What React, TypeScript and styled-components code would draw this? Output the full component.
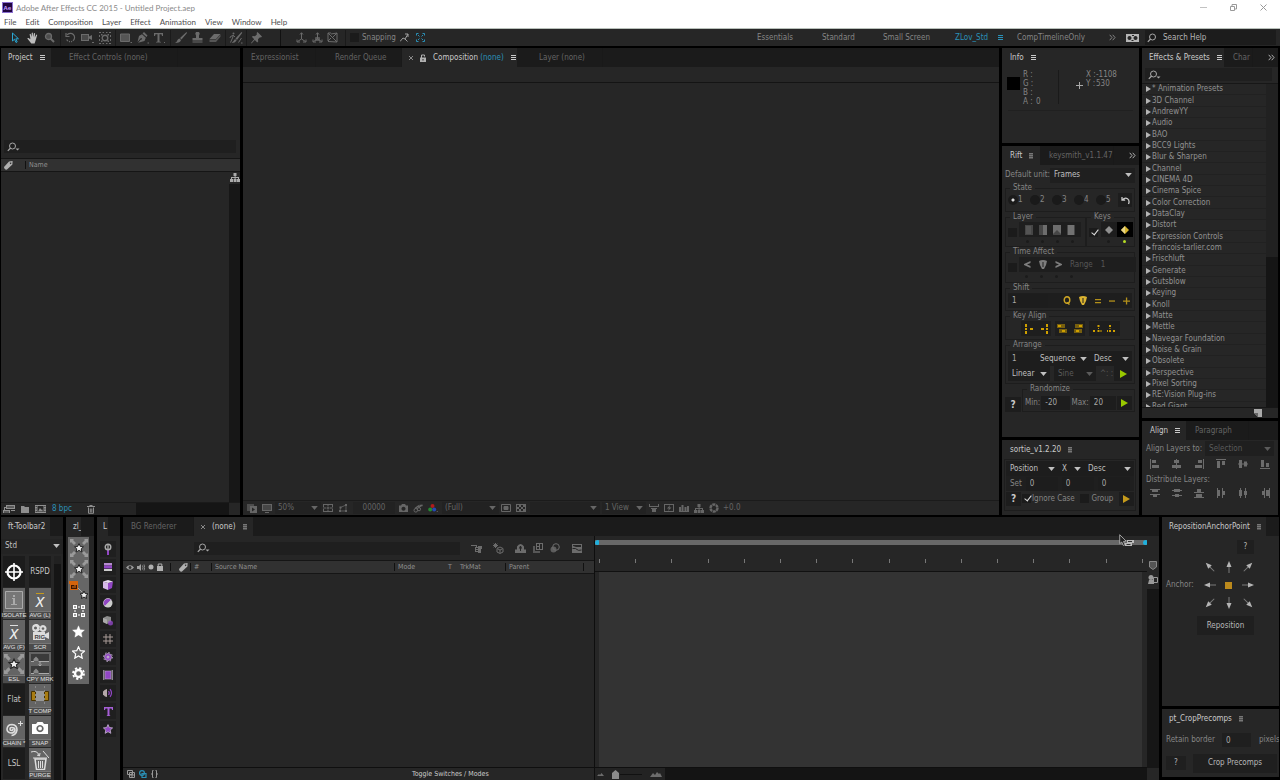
import React from "react";
import styled, { createGlobalStyle, css } from "styled-components";

const ui = '"DejaVu Sans Condensed", "DejaVu Sans", "Open Sans", sans-serif';
const system = 'Lato, "Open Sans", sans-serif';

const Global = createGlobalStyle`
  * { box-sizing: border-box; }
  html, body { margin: 0; padding: 0; background: #000; }
  body { font: 8px/10px ${ui}; color: #858585; }
  button, input, select { font: inherit; color: inherit; background: none; border: 0; padding: 0; margin: 0; border-radius: 0; outline: 0; }
  svg { display: block; flex: none; }
  ul { list-style: none; margin: 0; padding: 0; }
`;

/* ---------- frame ---------- */
const Shell = styled.div`
  display: flex; flex-direction: column; height: 100vh; min-height: 720px; overflow: hidden; background: #000;
`;
const TitleBar = styled.header`
  display: flex; align-items: center; height: 15px; padding: 0 2px; background: #fff; color: #8a8a8a; font: 8px/14px ${system};
`;
const Title = styled.span`flex: 1; padding-left: 3px;`;
const WindowButton = styled.button`
  width: 30px; height: 14px; display: grid; place-items: center; color: #999;
`;
const MenuBar = styled.nav`
  display: flex; gap: 9px; height: 14px; padding-left: 4px; background: #fff; border-bottom: 1px solid #b8c0ba;
`;
const MenuItem = styled.button`color: #505050; font: 8px/14px ${system};`;
const Toolbar = styled.div`
  display: flex; align-items: center; height: 17px; padding-left: 5px; background: #262626; color: #858585;
`;
const ToolGroup = styled.div`
  display: flex; align-items: center; height: 16px; padding: 0 2px;
  & + & { border-left: 1px solid #1a1a1a; padding-left: 1px; }
`;
const Tool = styled.button<{ $color?: string; $w?: number }>`
  display: grid; place-items: center; width: ${p => p.$w ?? 17}px; height: 16px; color: ${p => p.$color ?? "#6b6b6b"};
`;
const AxisTools = styled.div`
  display: flex; align-items: center; height: 16px; margin-left: 13px; padding: 0 5px 0 12px; border-left: 1px solid #111;
`;
const CheckLabel = styled.label<{ $gap?: number }>`
  display: flex; align-items: center; gap: ${p => p.$gap ?? 3}px; white-space: nowrap;
`;
const Check = styled.input`
  appearance: none; width: 9px; height: 9px; background: #1b1b1b; flex: none;
  &:checked::after {
    content: ""; display: block; width: 3px; height: 6px; margin: 0 0 0 4px;
    border: solid #ddd; border-width: 0 1px 1px 0; transform: rotate(38deg);
  }
`;
const Snapping = styled.div`display: flex; align-items: center; height: 16px; padding-left: 4px; border-left: 1px solid #1a1a1a; gap: 2px;`;
const Workspaces = styled.nav`
  display: flex; flex: 1; align-items: center; height: 17px; justify-content: flex-end;
`;
const Workspace = styled.button<{ $on?: boolean; $w: number }>`
  width: ${p => p.$w}px; text-align: left; color: ${p => (p.$on ? "#2a91b8" : "#858585")}; display: flex; gap: 10px; align-items: center; white-space: nowrap;
`;
const HelpSearch = styled.label`
  display: flex; align-items: center; gap: 2px; width: 131px; height: 15px; padding-left: 2px; margin: 0 4px 0 6px; background: #1c1c1c; color: #b0b0b0;
  input { width: 100px; }
  input::placeholder { color: #b5b5b5; opacity: 1; }
`;

const Upper = styled.main`display: flex; flex: 1; min-height: 0; gap: 3px; padding: 2px 2px 0 1px;`;
const Lower = styled.section`display: flex; height: 263px; flex: none; gap: 3px; padding: 0 1px; margin-top: 2px;`;
const Column = styled.div<{ $w: number }>`
  display: flex; flex-direction: column; gap: 3px; width: ${p => p.$w}px; flex: none; min-height: 0;
`;
const Panel = styled.section<{ $w?: number; $h?: number }>`
  display: flex; flex-direction: column; min-width: 0; min-height: 0; overflow: hidden; background: #262626;
  ${p => (p.$w ? css`width: ${p.$w}px; flex: none;` : css`flex: 1;`)}
  ${p => p.$h && css`height: ${p.$h}px; flex: none;`}
`;
const Tabs = styled.div`display: flex; height: 19px; flex: none; background: #1b1b1b; overflow: hidden;`;
const Tab = styled.button<{ $on?: boolean; $w: number; $pad?: number }>`
  display: flex; align-items: center; gap: 7px; width: ${p => p.$w}px; flex: none; padding-left: ${p => p.$pad ?? 8}px;
  white-space: nowrap; overflow: hidden; color: #646464; border-right: 1px solid #191919;
  ${p => p.$on && css`color: #cacaca; background: #262626; border-right: 0;`}
`;
const More = styled.button`margin-left: auto; padding-right: 3px; color: #b0b0b0;`;
const Blue = styled.span`color: #2a91b8;`;
const Spacer = styled.div`flex: 1;`;

/* ---------- glyphs ---------- */
type GProps = { w?: number; h?: number; box?: string; children: React.ReactNode; stroke?: boolean; sw?: number; color?: string };
const G = ({ w = 12, h = 12, box, children, stroke, sw = 1, color }: GProps) => (
  <svg width={w} height={h} viewBox={box ?? `0 0 ${w} ${h}`} color={color} aria-hidden="true"
    fill={stroke ? "none" : "currentColor"} stroke={stroke ? "currentColor" : "none"} strokeWidth={sw}>{children}</svg>
);
const Burger = () => <G w={5} h={6}><path d="M0 0h5v1H0zM0 2h5v1H0zM0 4h5v1H0z" /></G>;
const Grip = () => <G w={4} h={6} color="#777"><path d="M0 0h4v1H0zM0 2h4v1H0zM0 4h4v1H0z" /><path d="M0 0h4v6H0z" opacity=".5" /></G>;
const Chevrons = () => <G w={7} h={7} stroke><path d="M.7.8 3 3.5.7 6.2M3.7.8 6 3.5 3.7 6.2" /></G>;
const Down = () => <G w={7} h={4}><path d="M.2 0h6.600L3.500 4z" /></G>;
const Lens = ({ menu = true }: { menu?: boolean }) => (
  <G w={14} h={10} color="#a8a8a8"><circle cx="5.500" cy="4" r="3" fill="none" stroke="currentColor" strokeWidth="1" /><path d="M3.600 6 .8 8.800" stroke="currentColor" strokeWidth="1.200" />{menu && <path d="M8.500 6.500h4l-2 2z" />}</G>
);
const Tag = () => <G w={9} h={9} color="#b0b0b0"><path fillRule="evenodd" d="M0 6 5 .6 8.600 0 8.400 3.400 3 8.600Q1.700 9 .8 8 0 7 0 6zM6.600 1.400a.8.8 0 1 0 .01 0z" /></G>;
const Flow = ({ color }: { color?: string }) => <G w={10} h={9} color={color}><path d="M3.500 0h3v3h-3zM0 6h3v3H0zM3.600 6h3v3h-3zM7 6h3v3H7zM4.600 3h1v3h-1zM1 4h8v.9H1zM1 4h1v2H1zM8 4h1v2H8z" /></G>;
const Star = ({ w = 10, color = "#fff", line, fill }: { w?: number; color?: string; line?: boolean; fill?: string }) => (
  <G w={w} h={w} box="0 0 12 12" color={color}><path d="M6 .7 7.600 4.300l3.900.4-2.900 2.600.8 3.900L6 9.200l-3.400 2 .8-3.900L.5 4.700l3.900-.4z" fill={fill ?? (line ? "none" : "currentColor")} stroke="currentColor" strokeWidth={line || fill ? 1.1 : 0.3} /></G>
);
const Pointer = ({ color }: { color: string }) => <G w={8} h={9} color={color}><path d="M0 1Q4-1 8 1L7 5 5 9H3L1 5z" /><path d="M4 2v5" stroke="#222" /></G>;

/* ---------- generic parts ---------- */
const SelectWrap = styled.span<{ $w?: number; $dim?: boolean; $bg?: string }>`
  position: relative; display: flex; align-items: center; height: 15px; flex: ${p => (p.$w ? "none" : 1)};
  ${p => p.$w && css`width: ${p.$w}px;`}
  background: ${p => p.$bg ?? "#1d1d1d"}; color: ${p => (p.$dim ? "#5b5b5b" : "#c0c0c0")};
  select { appearance: none; width: 100%; padding: 0 9px 0 4px; }
  svg { position: absolute; right: 3px; pointer-events: none; }
`;
const Select = ({ value, label, w, dim, bg }: { value: string; label: string; w?: number; dim?: boolean; bg?: string }) => (
  <SelectWrap $w={w} $dim={dim} $bg={bg}><select aria-label={label} defaultValue={value}><option>{value}</option></select><Down /></SelectWrap>
);
const Field = styled.input<{ $w: number; $bg?: string }>`
  width: ${p => p.$w}px; height: 14px; padding-left: 4px; background: ${p => p.$bg ?? "#1d1d1d"}; color: #a8a8a8;
`;
const Row = styled.div<{ $h?: number; $gap?: number; $pad?: string; $bg?: string }>`
  display: flex; align-items: center; flex: none; gap: ${p => p.$gap ?? 0}px; padding: ${p => p.$pad ?? "0"};
  ${p => p.$h && css`height: ${p.$h}px;`} ${p => p.$bg && css`background: ${p.$bg};`}
`;
const DarkButton = styled.button<{ $w: number; $h?: number; $bg?: string; $end?: boolean }>`
  display: grid; place-items: center; width: ${p => p.$w}px; height: ${p => p.$h ?? 15}px; background: ${p => p.$bg ?? "#1d1d1d"}; color: #b8b8b8;
  ${p => p.$end && css`margin-left: auto;`}
`;
const Dim = styled.span`color: #646464;`;

/* ---------- project ---------- */
const SearchStrip = styled.label<{ $m?: string }>`
  display: flex; align-items: center; gap: 4px; height: 13px; margin: ${p => p.$m ?? "0"}; padding-left: 3px; background: #1f1f1f;
  input { flex: 1; min-width: 0; }
`;
const ListHead = styled.div`
  display: flex; align-items: center; height: 14px; flex: none; padding-left: 3px; background: #313131; border: solid #151515; border-width: 1px 0; color: #8f8f8f; font-size: 7px;
`;
const HeadCell = styled.span<{ $w?: number; $line?: boolean }>`
  display: flex; align-items: center; height: 8px; white-space: nowrap; ${p => p.$w && css`width: ${p.$w}px;`} flex: none;
  ${p => p.$line && css`border-left: 1px solid #111; padding-left: 3px;`}
`;
const ProjectBody = styled.div`display: flex; flex: 1; justify-content: flex-end;`;
const SideRail = styled.div<{ $w?: number }>`
  display: flex; flex-direction: column; align-items: center; gap: 2px; width: ${p => p.$w ?? 11}px; padding-top: 1px;
  &::after { content: ""; flex: 1; width: 100%; background: #171717; }
`;
const ProjectFoot = styled.div`display: flex; align-items: center; height: 13px; flex: none; padding-left: 2px; color: #8f8f8f; border-top: 1px solid #1a1a1a;`;
const ScrollTrack = styled.div`flex: 1; height: 12px; background: #151515; margin: 0 11px 0 5px; &::before { content: ""; display: block; width: 36px; height: 12px; background: #242424; }`;

const Project = () => (
  <Panel $w={239}>
    <Tabs>
      <Tab $on $w={50} $pad={7}>Project <Burger /></Tab>
      <Tab $w={127} $pad={18}>Effect Controls (none)</Tab>
    </Tabs>
    <Row $h={73} />
    <SearchStrip $m="0 4px 5px 3px"><Lens /><input aria-label="Search project" /></SearchStrip>
    <ListHead><HeadCell $w={21}><Tag /></HeadCell><HeadCell $line>Name</HeadCell></ListHead>
    <ProjectBody><SideRail><Flow color="#aaa" /></SideRail></ProjectBody>
    <ProjectFoot>
      <Row $gap={6}>
        <G w={12} h={10}><path d="M3 1h9v4H3zM0 6h7v3H0zM1 3h1v3H1zM1 3h2v1H1zM8 6h4v1H8z" /><path d="M4 3h7M1 8h5" stroke="#262626" /></G>
        <G w={8} h={8}><path d="M0 1h3l1 1h4v6H0z" /></G>
        <G w={11} h={8}><path fillRule="evenodd" d="M0 0h11v8H0zM2.500 1h6v6h-6zM.7 1v1h1V1zM.7 3.500v1h1v-1zM.7 6v1h1V6zM9.400 1v1h1V1zM9.400 3.500v1h1v-1zM9.400 6v1h1V6z" /><path d="M3 6.500 5 3l1.500 2L7 4l1 2.500z" /></G>
        <Blue>8 bpc</Blue>
      </Row>
      <Row $pad="0 0 0 15px"><G w={8} h={9}><path d="M0 1h8v1H0zM2.500 0h3v1h-3z" /><path d="M1.500 2.500v5.800h5V2.500M3.300 3.500v4M4.800 3.500v4" fill="none" stroke="currentColor" /></G></Row>
      <ScrollTrack />
    </ProjectFoot>
  </Panel>
);

/* ---------- composition viewer ---------- */
const Rule = styled.div`height: 16px; flex: none; border-bottom: 1px solid #141414;`;
const ViewerFoot = styled.div`display: flex; align-items: center; height: 15px; flex: none; padding-left: 3px; border-top: 1px solid #1b1b1b; color: #666;`;
const Drop = styled.button<{ $w: number }>`
  display: flex; align-items: center; justify-content: space-between; height: 12px; width: ${p => p.$w}px; padding: 0 3px; background: #222;
`;
const Icons = styled.div<{ $gap?: number; $pad?: string }>`display: flex; align-items: center; gap: ${p => p.$gap ?? 5}px; padding: ${p => p.$pad ?? "0 4px"};`;

const Viewer = () => (
  <Panel>
    <Tabs>
      <Tab $w={73}>Expressionist</Tab>
      <Tab $w={86} $pad={19}>Render Queue</Tab>
      <Tab $on $w={115} $pad={7}>
        <G w={4} h={4} stroke color="#888"><path d="M0 0l4 4M4 0 0 4" /></G>
        <G w={6} h={8} color="#b0b0b0"><path fillRule="evenodd" d="M0 3.500h6V8H0zM2.500 5v1.500h1V5z" /><path d="M1.500 4V1h3v1.500" fill="none" stroke="currentColor" /></G>
        <span>Composition <Blue>(none)</Blue></span> <Burger />
      </Tab>
      <Tab $w={86} $pad={22}>Layer (none)</Tab>
    </Tabs>
    <Rule />
    <Spacer />
    <ViewerFoot>
      <Icons $pad="0 3px 0 1px">
        <G w={10} h={9}><path d="M0 0h7v7H0z" opacity=".6" /><path d="M3 2h7v7H3z" /><path d="M5 3.500v4l3-2z" fill="#262626" /></G>
        <G w={10} h={9}><path fillRule="evenodd" d="M0 0h10v7H0zM1 1v5h8V1zM3 8h4v1H3z" /><path d="M1 1h8v5H1z" opacity=".5" /></G>
      </Icons>
      <Drop $w={46}>50%<Down /></Drop>
      <Icons $pad="0 5px 0 2px">
        <G w={10} h={8}><path d="M0 0h10v3H9V1H1v2H0zM0 5h1v2h8V5h1v3H0zM4.500 0h1v2.500h-1zM4.500 5.500h1V8h-1zM0 3.500h3v1H0zM7 3.500h3v1H7zM3.500 3.500h3v1h-3zM4.500 3h1v2h-1z" /></G>
        <G w={10} h={8}><path d="M1 6h2v2H1zM7 6h2v2H7zM1.500 2.500h2v2h-2zM7 0h2v2H7z" /><path d="M2 7h6M8 7V1L2.500 3.500 2 7" fill="none" stroke="currentColor" strokeWidth=".8" /></G>
      </Icons>
      <DarkButton $w={42} $h={12} $bg="#222"><Dim>00000</Dim></DarkButton>
      <Icons>
        <G w={9} h={8}><path fillRule="evenodd" d="M0 1.500h2L3 0h3l1 1.500h2V8H0zM4.500 2.800a2 2 0 1 0 .01 0z" /></G>
        <G w={10} h={9} stroke><circle cx="2.800" cy="6.300" r="1.800" /><circle cx="6" cy="5.200" r="1.600" /><path d="M2 4.500 6 1.500M5.500 3.500 9.500.8M6.500 1.500h3" strokeWidth="1.400" /></G>
        <G w={10} h={8}><circle cx="4.500" cy="2" r="2" fill="#b01c1c" /><circle cx="2.200" cy="5.500" r="2" fill="#258a32" /><circle cx="6.200" cy="5.500" r="2" fill="#2549b5" /><path d="M8 7h2v1z" /></G>
      </Icons>
      <Drop $w={57}>(Full)<Down /></Drop>
      <Icons $pad="0 4px 0 2px">
        <G w={10} h={8} stroke><path d="M.5.5h9v7h-9z" /><path d="M3 2.500h4v3H3z" fill="currentColor" /></G>
        <G w={10} h={8}><path fillRule="evenodd" d="M0 0h10v8H0zM1 1v2h2V1zM5 1v2h2V1zM3 3v2h2V3zM7 3v2h2V3zM1 5v2h2V5zM5 5v2h2V5z" /></G>
      </Icons>
      <Drop $w={70}><span /><Down /></Drop>
      <Icons $pad="0 1px" />
      <Drop $w={44}>1 View<Down /></Drop>
      <Icons $pad="0 2px 0 3px">
        <G w={10} h={8}><path d="M0 0h1v3h8V0h1v3H9v-1H1v1H0zM2 4h6v1H2zM3 5h4v3H3z" /></G>
        <G w={10} h={8}><path fillRule="evenodd" d="M0 0h10v8H0zM1 1v6h8V1z" /><path d="M6 1 3 4.500h2L4 7l3.500-3.500h-2z" /></G>
        <G w={10} h={8}><path d="M0 3h2v5H0zM2.500 1h2v7h-2zM5.500 3h2v5h-2zM8 2h2v6H8zM0 7h10v1H0z" /></G>
        <Flow />
      </Icons>
      <Icons $gap={4} $pad="0 4px 0 3px">
        <G w={10} h={10}><circle cx="5" cy="5" r="3.500" fill="none" stroke="currentColor" strokeWidth="2.400" strokeDasharray="3 .6" /></G>
        <Dim>+0.0</Dim>
      </Icons>
    </ViewerFoot>
  </Panel>
);

/* ---------- info ---------- */
const InfoBody = styled.div`
  display: flex; margin: 3px 6px 0; height: 41px; border-bottom: 1px solid #202020; line-height: 9px;
`;
const Swatch = styled.div`width: 13px; height: 13px; margin: 7px 3px 0 -1px; background: #000;`;
const Channels = styled.dl<{ $key: number }>`
  display: grid; grid-template-columns: ${p => p.$key}px 20px; margin: 0; align-content: start; dt, dd { margin: 0; }
`;
const Coordinates = styled.div`display: flex; margin-left: 2px; height: 34px; border-left: 1px solid #1a1a1a; padding-left: 17px; gap: 3px;`;
const CrossHair = styled.div`padding-top: 12px;`;

const Info = () => (
  <Panel $h={95}>
    <Tabs><Tab $on $w={137}>Info <Burger /></Tab></Tabs>
    <InfoBody>
      <Swatch />
      <Channels $key={13}><dt>R :</dt><dd /><dt>G :</dt><dd /><dt>B :</dt><dd /><dt>A :</dt><dd>0</dd></Channels>
      <Coordinates>
        <CrossHair><G w={7} h={7} stroke color="#aaa"><path d="M3.500 0v7M0 3.500h7" /></G></CrossHair>
        <Channels $key={10}><dt>X :</dt><dd>-1108</dd><dt>Y :</dt><dd>530</dd></Channels>
      </Coordinates>
    </InfoBody>
  </Panel>
);

/* ---------- rift ---------- */
const RiftBody = styled.div`display: flex; flex-direction: column; padding: 2px 4px 0 3px;`;
const Set = styled.fieldset<{ $h: number; $top?: boolean }>`
  display: flex; align-items: ${p => (p.$top ? "flex-start" : "center")}; min-width: 0; height: ${p => p.$h}px; margin: 0; padding: 0 2px; border: 1px solid #1d1d1d; flex: none;
  legend { padding: 0 3px; margin-left: 2px; line-height: 10px; }
`;
const Twin = styled.div`display: grid; grid-template-columns: 81px 1fr;`;
const Radio = styled.label`
  display: flex; align-items: center; width: 22px; flex: none;
  input { appearance: none; width: 10px; height: 10px; border-radius: 5px; background: #1a1a1a; }
  input:checked { background: radial-gradient(circle, #ddd 1px, #1a1a1a 2px); }
`;
const Strip = styled.div<{ $gap?: number; $h?: number; $pad?: string; $grow?: boolean; $color?: string }>`
  display: flex; align-items: center; gap: ${p => p.$gap ?? 5}px; height: ${p => p.$h ?? 15}px; padding: ${p => p.$pad ?? "0 5px"}; background: #1e1e1e;
  ${p => p.$grow && css`flex: 1;`} color: ${p => p.$color ?? "#777"}; white-space: nowrap;
`;
const Dots = styled.div<{ $gap: number; $pad: number }>`
  display: flex; gap: ${p => p.$gap}px; height: 6px; align-items: flex-end; padding-left: ${p => p.$pad}px;
  i { width: 3px; height: 3px; border-radius: 2px; background: #1b1b1b; }
  i[data-on] { background: #b5dc24; }
`;
const Stack = styled.div`display: flex; flex-direction: column;`;
const Gold = styled.div`display: flex; align-items: center; gap: 8px; color: #b3901a; margin-left: auto; padding-right: 2px;`;
const Play = ({ color = "#98c800" }: { color?: string }) => <G w={7} h={8} color={color}><path d="M0 0l7 4-7 4z" /></G>;
const Question = styled.b`color: #c8c8c8; font-size: 10px;`;
const Shade = ({ d, o }: { d: string; o: string }) => <G w={10} h={10}><path d="M1 0h8v10H1z" opacity=".45" /><path d={d} opacity={o} /></G>;
const KeyDots = ({ d, bar }: { d: string; bar?: string }) => <G w={10} h={10} color="#cfa000"><path d={d} />{bar && <path d={bar} opacity=".5" />}</G>;
const ArrangeRows = styled.div`flex: 1; display: flex; flex-direction: column; padding-top: 1px;`;
const Tiny = styled.span`width: 10px; color: #555; white-space: nowrap;`;
const RandomRow = styled.div`display: grid; grid-template-columns: 17px 1fr; align-items: end;`;
const MinMax = styled.div`display: flex; flex: 1; align-items: center; justify-content: space-between; span { flex: none; }`;

const Rift = () => (
  <Panel $h={291}>
    <Tabs><Tab $on $w={38}>Rift <Grip /></Tab><Tab $w={74} $pad={9}>keysmith_v1.1.47</Tab><More aria-label="More panels"><Chevrons /></More></Tabs>
    <RiftBody>
      <Row $h={16}><span>Default unit:</span><Select label="Default unit" value="Frames" bg="#1f1f1f" /></Row>
      <Set $h={29}><legend>State</legend>
        {[1, 2, 3, 4, 5].map(n => <Radio key={n}><input type="radio" name="state" defaultChecked={n === 1} />{n}</Radio>)}
        <DarkButton $end $w={15} $h={14} aria-label="Undo"><G w={9} h={9} stroke sw={1.3} color="#ccc"><path d="M1 1v3.200h3.200M1.500 4Q4 1 6.500 2.800t1 5.200" /></G></DarkButton>
      </Set>
      <Twin>
        <Set $h={35} $top><legend>Layer</legend>
          <Row $gap={2}>
            <Check type="checkbox" aria-label="Layer" />
            <Stack>
              <Strip $h={15} $gap={4}>
                <Shade d="M2 1h5v8H2z" o=".3" /><Shade d="M5 0h4v10H5z" o=".8" /><Shade d="M1 0h8v9L5 5 1 9z" o=".8" /><Shade d="M2 0h6v10H2z" o=".9" />
              </Strip>
              <Dots $gap={12} $pad={7}><i /><i /><i /><i /></Dots>
            </Stack>
          </Row>
        </Set>
        <Set $h={35} $top><legend>Keys</legend>
          <Row $gap={3}>
            <Check type="checkbox" defaultChecked aria-label="Keys" />
            <Stack>
              <Row>
                <DarkButton $w={16}><G w={8} h={8} color="#8f8f8f"><path d="M4 0l4 4-4 4-4-4z" /></G></DarkButton>
                <DarkButton $w={16} $bg="#000"><G w={8} h={8}><path d="M4 0l4 4-4 4-4-4z" fill="#d7b52c" /><path d="M4 0v8L0 4z" fill="#e6d489" /></G></DarkButton>
              </Row>
              <Dots $gap={13} $pad={6}><i /><i data-on="" /></Dots>
            </Stack>
          </Row>
        </Set>
      </Twin>
      <Set $h={36}><legend>Time Affect</legend>
        <Row $gap={2}>
          <Check type="checkbox" aria-label="Time affect" />
          <Stack>
            <Strip $gap={8} $pad="0 31px 0 5px" $color="#565656">
              <G w={7} h={7} color="#7d7d7d"><path d="M6.500 0v2L3 3.500 6.500 5v2L0 4V3z" /></G>
              <Pointer color="#7d7d7d" />
              <G w={7} h={7} color="#7d7d7d"><path d="M.5 0v2L4 3.500.5 5v2L7 4V3z" /></G>
              <span>Range</span><span>1</span>
            </Strip>
            <Dots $gap={12} $pad={6}><i /><i /><i /><i /></Dots>
          </Stack>
        </Row>
      </Set>
      <Set $h={28}><legend>Shift</legend>
        <Strip $grow $pad="0">
          <Field $w={40} defaultValue="1" aria-label="Shift amount" />
          <Gold>
            <G w={8} h={9} stroke sw={1.4} color="#cda524"><ellipse cx="4" cy="4" rx="2.800" ry="3.200" /><path d="M4 6.500 6.500 8.500" /></G>
            <Pointer color="#dcb431" />
            <G w={6} h={8}><path d="M0 2h6v1.200H0zM0 5h6v1.200H0z" /></G>
            <G w={6} h={8}><path d="M0 3.400h6v1.300H0z" /></G>
            <G w={7} h={8}><path d="M0 3.400h7v1.300H0zM2.900.5h1.300v7H2.900z" /></G>
          </Gold>
        </Strip>
      </Set>
      <Set $h={29}><legend>Key Align</legend>
        <Row $gap={4} $pad="0 0 0 13px">
          <Strip $gap={6} $pad="0 2px"><KeyDots d="M2 0h2v3H2zM2 4h2v2H2zM2 7h2v3H2zM7 4h3v2H7z" /><KeyDots d="M7 0h2v3H7zM7 4h2v2H7zM7 7h2v3H7zM2 4h3v2H2z" /></Strip>
          <Strip $gap={6} $pad="0 2px"><KeyDots d="M1 1h3v2H1zM5 6h3v2H5z" bar="M0 0h8v4H0zM2 5h8v4H2z" /><KeyDots d="M6 1h3v2H6zM3 6h3v2H3z" bar="M2 0h8v4H2zM1 5h8v4H1z" /></Strip>
          <Strip $gap={5} $pad="0 3px"><KeyDots d="M5.500 1h2v2h-2zM1 6h2v2H1zM5.500 6h2v2h-2zM8.500 6h1v2h-1zM6 4h1v1H6z" /><KeyDots d="M2 1h2v2H2zM2 6h2v2H2zM6 6h2v2H6zM0 6h1v2H0zM2.500 4h1v1h-1z" /></Strip>
        </Row>
      </Set>
      <Set $h={44}><legend>Arrange</legend>
        <ArrangeRows>
          <Row $bg="#1d1d1d"><Field $w={28} defaultValue="1" aria-label="Arrange step" /><Select w={54} label="Arrange mode" value="Sequence" /><Select label="Arrange order" value="Desc" /></Row>
          <Row $gap={4}><Select w={42} label="Easing" value="Linear" /><Select w={42} dim label="Curve" value="Sine" /><Tiny>^: :</Tiny><DarkButton $end $w={18} aria-label="Arrange"><Play /></DarkButton></Row>
        </ArrangeRows>
      </Set>
      <RandomRow>
        <DarkButton $w={16} $h={15}><Question>?</Question></DarkButton>
        <Set $h={28}><legend>Randomize</legend>
          <MinMax><span>Min:</span><Field $w={29} defaultValue="-20" aria-label="Min" /><span>Max:</span><Field $w={26} defaultValue="20" aria-label="Max" /><DarkButton $w={15} $h={14} aria-label="Randomize"><Play /></DarkButton></MinMax>
        </Set>
      </RandomRow>
    </RiftBody>
  </Panel>
);

/* ---------- sortie ---------- */
const SortieBody = styled.div`margin: 0 3px 4px 2px; padding: 1px 1px 0; border: 1px solid #1d1d1d; flex: 1;`;
const Sortie = () => (
  <Panel>
    <Tabs><Tab $on $w={137}>sortie_v1.2.20 <Grip /></Tab></Tabs>
    <SortieBody>
      <Row $h={15} $bg="#1f1f1f"><Select w={52} label="Sort by" value="Position" /><Select w={26} label="Axis" value="X" /><Select label="Order" value="Desc" /></Row>
      <Row $h={15} $bg="#1f1f1f" $gap={4} $pad="0 0 0 4px"><span>Set</span><Field $w={32} defaultValue="0" aria-label="Set x" /><Field $w={32} defaultValue="0" aria-label="Set y" /><Field $w={32} defaultValue="0" aria-label="Set z" /></Row>
      <Row $h={15} $gap={1}>
        <DarkButton $w={15} $h={14}><Question>?</Question></DarkButton>
        <CheckLabel $gap={1}><Check type="checkbox" defaultChecked />Ignore Case</CheckLabel>
        <Spacer />
        <CheckLabel $gap={2}><Check type="checkbox" />Group</CheckLabel>
        <Spacer />
        <DarkButton $w={15} $h={14} aria-label="Sort"><Play color="#c59a1b" /></DarkButton>
      </Row>
    </SortieBody>
  </Panel>
);

/* ---------- effects & align ---------- */
const effects = ["* Animation Presets", "3D Channel", "AndrewYY", "Audio", "BAO", "BCC9 Lights", "Blur & Sharpen", "Channel", "CINEMA 4D", "Cinema Spice", "Color Correction", "DataClay", "Distort", "Expression Controls", "francois-tarlier.com", "Frischluft", "Generate", "Gutsblow", "Keying", "Knoll", "Matte", "Mettle", "Navegar Foundation", "Noise & Grain", "Obsolete", "Perspective", "Pixel Sorting", "RE:Vision Plug-ins", "Red Giant"];
const EffectsArea = styled.div`display: flex; flex: 1; min-height: 0; overflow: hidden; border-top: 1px solid #171717;`;
const EffectList = styled.ul`flex: 1; display: grid; grid-template-rows: repeat(29, 1fr); height: 329px; color: #929292;`;
const Effect = styled.li`
  display: flex; align-items: center; gap: 1px; padding-left: 3px; border-bottom: 1px solid #212121; white-space: nowrap;
  svg { color: #b5b5b5; }
`;
const Scroll = styled.div<{ $w: number; $thumb: number }>`
  width: ${p => p.$w}px; background: #151515; flex: none;
  &::before { content: ""; display: block; height: ${p => p.$thumb}px; background: #212121; }
`;
const EffectsFoot = styled.div`display: flex; align-items: center; justify-content: flex-end; height: 11px; flex: none; border-top: 1px solid #161616; padding-right: 16px;`;

const Effects = () => (
  <Panel>
    <Tabs><Tab $on $w={82} $pad={7}>Effects &amp; Presets <Burger /></Tab><Tab $w={29} $pad={9}>Char</Tab><More aria-label="More panels"><Chevrons /></More></Tabs>
    <SearchStrip $m="1px 6px 2px 3px"><Lens /><input aria-label="Search effects" /></SearchStrip>
    <EffectsArea>
      <EffectList>{effects.map(e => <Effect key={e}><G w={6} h={6}><path d="M1 0l5 3-5 3z" /></G>{e}</Effect>)}</EffectList>
      <Scroll $w={12} $thumb={173} />
    </EffectsArea>
    <EffectsFoot><G w={8} h={8} color="#aaa"><path d="M0 0h8v8H4L0 4z" /><path d="M0 4h4v4z" fill="#666" /></G></EffectsFoot>
  </Panel>
);

const AlignBody = styled.div`padding: 2px 4px; display: flex; flex-direction: column;`;
const AlignIcons = styled.div<{ $h: number }>`
  display: grid; grid-template-columns: repeat(6, 1fr); justify-items: center; align-items: center; height: ${p => p.$h}px; color: #6c6c6c; margin: 0 -2px;
`;
const alignGlyphs = ["M0 0h1v10H0zM2 1h4v3H2zM2 6h7v3H2z", "M4 0h1v10H4zM2 1h5v3H2zM0 6h9v3H0z", "M9 0h1v10H9zM4 1h4v3H4zM1 6h7v3H1z", "M0 0h10v1H0zM1 2h3v7H1zM6 2h3v4H6z", "M0 4.500h10v1H0zM1 1h3v8H1zM6 2.500h3v5H6z", "M0 9h10v1H0zM1 1h3v7H1zM6 4h3v4H6z"];
const distGlyphs = ["M0 1h10v1H0zM2 2h6v2H2zM0 6h10v1H0zM3 7h4v2H3z", "M2 1h6v3H2zM0 2h10v1H0zM3 6h4v3H3zM0 7h10v1H0z", "M3 1h4v3H3zM0 4h10v1H0zM2 6h6v3H2zM0 9h10v1H0z", "M1 0h1v10H1zM2 2h2v6H2zM6 0h1v10H6zM7 3h2v4H7z", "M2 0h1v10H2zM1 2h3v6H1zM7 0h1v10H7zM6 3h3v4H6z", "M4 0h1v10H4zM2 3h2v4H2zM9 0h1v10H9zM6 2h3v6H6z"];
const Align = () => (
  <Panel $h={94}>
    <Tabs><Tab $on $w={44}>Align <Burger /></Tab><Tab $w={63} $pad={9}>Paragraph</Tab></Tabs>
    <AlignBody>
      <Row $h={13} $gap={3}><span>Align Layers to:</span><Select label="Align layers to" value="Selection" dim bg="#1f1f1f" /></Row>
      <AlignIcons $h={18}>{alignGlyphs.map((d, i) => <G key={i} w={10} h={10}><path d={d} /></G>)}</AlignIcons>
      <Row $h={14}><span>Distribute Layers:</span></Row>
      <AlignIcons $h={12}>{distGlyphs.map((d, i) => <G key={i} w={10} h={10}><path d={d} /></G>)}</AlignIcons>
    </AlignBody>
  </Panel>
);

/* ---------- ft-toolbar ---------- */
const FtBody = styled.div`display: flex; flex: 1; min-height: 0; overflow: hidden; padding-left: 2px; gap: 3px;`;
const FtGrid = styled.div`display: grid; grid-template-columns: 22px 22px; grid-auto-rows: 31px; gap: 1px 4px;`;
const Cell = styled.button<{ $flat?: boolean }>`
  display: flex; flex-direction: column; align-items: center; justify-content: center; height: 31px; color: #c8c8c8;
  background: ${p => (p.$flat ? "#1c1c1c" : "#646464")};
`;
const Pic = styled.span`flex: 1; min-height: 0; display: grid; place-items: center;`;
const Cap = styled.span`
  display: flex; justify-content: center; width: 22px; height: 8px; background: #4c4c4c; border-top: 1px solid #777; color: #e0e0e0;
  font: 6px/7px "Liberation Sans Narrow", "Liberation Sans", sans-serif; white-space: nowrap;
`;
const MeanBar = styled.i<{ $c: string }>`
  display: flex; flex-direction: column; align-items: center; font: italic 18px/14px "Open Sans", sans-serif; color: #eee;
  &::before { content: ""; width: 8px; height: 1px; background: ${p => p.$c}; margin-bottom: -1px; }
`;
const Burst = ({ w = 18 }: { w?: number }) => (
  <G w={w} h={w} box="0 0 18 18" color="#a8a8a8"><path d="M0 0h4L3 1l3 3-2 2-3-3-1 1zM18 0v4l-1-1-3 3-2-2 3-3-1-1zM0 18v-4l1 1 3-3 2 2-3 3 1 1zM18 18h-4l1-1-3-3 2-2 3 3 1-1z" opacity=".8" /><path d="M9 4.500l1.400 3 3.100.3-2.300 2.100.7 3.100L9 11.400 6.100 13l.7-3.100-2.300-2.100 3.100-.3z" fill="#eee" stroke="#222" /></G>
);
const cells: { cap?: string; text?: string; pic?: React.ReactNode }[] = [
  { pic: <G w={20} h={20} stroke sw={1.6} color="#fff"><circle cx="10" cy="10" r="6.500" strokeWidth="2.200" /><path d="M10 1v18M1 10h18" /></G> },
  { text: "RSPD" },
  { cap: "ISOLATE", pic: <G w={18} h={18}><path d="M.5.5h17v17H.5z" fill="#777" stroke="#aaa" /><path d="M7 7h3v6h2v1H6v-1h2V8H7zM8 4h2v2H8z" fill="#aaa" /></G> },
  { cap: "AVG (L)", pic: <MeanBar $c="#c69a1c">x</MeanBar> },
  { cap: "AVG (F)", pic: <MeanBar $c="#ddd">x</MeanBar> },
  { cap: "SCR", pic: <G w={18} h={16}><path fillRule="evenodd" d="M4.500 0a4 4 0 1 1 0 7.900A4 4 0 0 1 4.500 0zM4.500 2.500a1.500 1.500 0 1 0 .01 0zM12 1a3.500 3.500 0 1 1-.01 0zM12 3.200a1.300 1.300 0 1 0 .01 0zM2 8h12v2l4-2v7l-4-2v3H2z" fill="#ddd" /><text x="3.500" y="14.800" fontSize="6" fontWeight="700" fill="#444" fontFamily="Liberation Sans Narrow, Liberation Sans, sans-serif">RIG</text></G> },
  { cap: "ESL", pic: <Burst w={20} /> },
  { cap: "CPY MRK", pic: <G w={18} h={20}><path d="M0 0h18v8H0zM0 12h18v8H0z" fill="#3b3b3b" /><path d="M2.500 7.500V5L5 2.500 7.500 5v2.500zM2.500 19.500V17L5 14.500 7.500 17v2.500z" fill="#888" /><path d="M0 7.500h3M7.500 7.500H18M0 19.500h3M7.500 19.500H18M9 8v4M7.500 10.500 9 12l1.500-1.500" stroke="#aaa" fill="none" /></G> },
  { text: "Flat" },
  { cap: "T COMP", pic: <G w={18} h={20}><path d="M5 5h8v10H5z" fill="#999" /><path d="M.5 5.500h4v9h-4zM13.500 5.500h4v9h-4z" fill="#a87c12" stroke="#493300" /><path d="M4.500 0v20M13.500 0v20" stroke="#888" strokeDasharray="2 2" /></G> },
  { cap: "CHAIN *", pic: <G w={20} h={18} stroke sw={1.6} color="#ddd"><path d="M9 10a1.500 1.500 0 1 1-1.500-1.500Q11 8.500 11 11q-.5 3-4 3-4-.5-4-4 .5-4.500 5-4.500 5 .5 5 5.500-1 5-5.500 5.500" /><path d="M16.500 2v5M14 4.500h5" strokeWidth="1" /></G> },
  { cap: "SNAP", pic: <G w={16} h={12}><path fillRule="evenodd" d="M0 2h4l1.500-2h5L12 2h4v10H0zM8 3a3.600 3.600 0 1 0 .01 0z" fill="#fff" /><circle cx="8" cy="6.600" r="2" fill="#fff" /></G> },
  { text: "LSL" },
  { cap: "PURGE", pic: <G w={18} h={20}><path d="M4 9h11l-1.500 10.500h-8z" fill="none" stroke="#ddd" strokeWidth="1.500" /><path d="M7.500 11v7M9.500 11v7M11.500 11v7M2 8h14M0 2q6-2 8 3M6 5l2.500 1L9 3M12 1l6 7" stroke="#ddd" fill="none" /></G> },
];
const FtToolbar = () => (
  <Panel $w={62}>
    <Tabs><Tab $on $w={49} $pad={7}>ft-Toolbar2</Tab></Tabs>
    <Row $h={20}><Select label="Toolbar set" value="Std" bg="#232323" /></Row>
    <FtBody>
      <FtGrid>{cells.map((c, i) => <Cell key={i} $flat={!c.cap}>{c.text ? c.text : <Pic>{c.pic}</Pic>}{c.cap && <Cap>{c.cap}</Cap>}</Cell>)}</FtGrid>
      <Scroll $w={7} $thumb={8} />
    </FtBody>
  </Panel>
);

/* ---------- slim tool columns ---------- */
const SlimList = styled.div<{ $bg?: string; $gap?: number; $m: string }>`display: flex; flex-direction: column; gap: ${p => p.$gap ?? 0}px; margin: ${p => p.$m}; background: ${p => p.$bg ?? "none"};`;
const SlimButton = styled.button<{ $h: number; $bg?: string }>`display: grid; place-items: center; height: ${p => p.$h}px; background: ${p => p.$bg ?? "none"};`;
const zlIcons = [
  <Burst w={18} />, <Burst w={18} />,
  <G w={20} h={20}><path d="M0 1h9v3H0zM1 4h8v6H1z" fill="#d5640c" /><path d="M2 5h6v4H2z" fill="#3c1500" /><path d="M4 6v2M6 5v3" stroke="#e87a1a" /><path d="M9 8l4 4" stroke="#aaa" /><path d="M15 11l1.200 2.500 2.800.3-2 1.900.6 2.800-2.600-1.400-2.600 1.400.6-2.800-2-1.900 2.800-.3z" fill="#eee" stroke="#222" /></G>,
  <G w={12} h={12} stroke color="#fff"><path d="M.6.600h2.800v2.800H.6zM8.600.600h2.800v2.800H8.600zM.6 8.600h2.800v2.800H.6zM8.600 8.600h2.800v2.800H8.600z" strokeWidth="1.200" /><path d="M5 2h2M5 10h2M2 5v2M10 5v2" /></G>,
  <Star w={13} />, <Star w={13} line />,
  <G w={13} h={13}><circle cx="6.500" cy="6.500" r="3.500" fill="none" stroke="#fff" strokeWidth="2.400" /><circle cx="6.500" cy="6.500" r="5.500" fill="none" stroke="#fff" strokeWidth="1.800" strokeDasharray="2.300 2.020" /></G>,
];
const violet = "#9146c4", lilac = "#b9a6c6";
const layerIcons = [
  <G w={10} h={12}><path d="M4 6h2v6H4z" fill={violet} /><circle cx="5" cy="4" r="2.800" fill="none" stroke="#aaa" strokeWidth="1.400" /><path d="M4.500 2h1v4h-1z" fill="#ccc" /></G>,
  <G w={8} h={8}><path d="M0 0h8v2.500H0z" fill="#b58ad0" /><path d="M0 2.500h8v3H0z" fill={violet} /><path d="M0 6h8v2H0z" fill="#ccc" /></G>,
  <G w={10} h={10}><path d="M0 1.500 5 3v7L0 8z" fill="#d5b8e8" /><path d="M5 3l5-1.500-1 6.500-4 2z" fill={violet} /><path d="M0 1.500 5 0l5 1.500L5 3z" fill="#e8dcf0" /></G>,
  <G w={10} h={10}><circle cx="5" cy="5" r="4.500" fill="#ccc" /><path d="M1.800 8.200A4.500 4.500 0 0 1 8.200 1.800z" fill={violet} stroke="#ddd" strokeWidth=".5" /></G>,
  <G w={10} h={10}><path d="M0 2l4-2 4 1v5L4 8 0 6z" fill="#8c8c8c" /><path d="M0 2l4 1.500V8L0 6z" fill="#aaa" /><circle cx="7.500" cy="7" r="2.500" fill={violet} opacity=".8" /></G>,
  <G w={10} h={10} stroke color="#a89a96"><path d="M3 0v10M7 0v10M0 3h10M0 7h10" /></G>,
  <G w={10} h={10}><circle cx="5" cy="5" r="3.500" fill={violet} stroke={lilac} strokeWidth=".8" /><circle cx="5" cy="5" r="4.500" fill="none" stroke={lilac} strokeDasharray="1.500 2" /><circle cx="5" cy="5" r="1.500" fill={lilac} /></G>,
  <G w={10} h={10}><path d="M2 1h6v8H2z" fill={violet} stroke={lilac} strokeWidth=".6" /><path d="M0 0h1.500v10H0zM8.500 0H10v10H8.500z" fill="#8d8590" /></G>,
  <G w={10} h={10}><path d="M0 3.500Q2 1 4 1v8Q2 9 0 6.500z" fill="#b4a8a8" /><path d="M5.500 3q1.500 2 0 4M7 1.200q3 3.800 0 7.600" fill="none" stroke={violet} strokeWidth="1.200" /></G>,
  <G w={9} h={9}><path d="M0 0h9v3H8L7.500 1.500h-2V8l1 1h-4l1-1V1.500h-2L1 3H0z" fill="#a65fd6" /></G>,
  <Star w={10} color={lilac} fill={violet} />,
];

/* ---------- timeline ---------- */
const TimelineBody = styled.div`position: relative; display: flex; flex: 1; min-height: 0;`;
const LayerSide = styled.div`display: flex; flex-direction: column; width: 472px; flex: none; border-right: 1px solid #0e0e0e;`;
const SearchRow = styled.div`display: flex; align-items: center; height: 24px; padding-left: 71px; color: #6c6c6c; gap: 11px; flex: none;`;
const TimelineSearch = styled(SearchStrip)`width: 266px; flex: none;`;
const TimeFoot = styled.div`display: flex; align-items: center; height: 13px; flex: none; border-top: 1px solid #0f0f0f; padding: 0 0 1px 4px; color: #999;`;
const TimeSide = styled.div`display: flex; flex-direction: column; flex: 1; min-width: 0;`;
const Ruler = styled.div`display: flex; flex-direction: column; height: 36px; flex: none; border-bottom: 1px solid #111; padding: 4px 0 8px;`;
const WorkBar = styled.div`
  display: flex; justify-content: space-between; align-items: center; height: 5px; background: #686868;
  &::before, &::after { content: ""; width: 4px; height: 5px; border-radius: 3px 1px 1px 2px; background: #1fb0dd; }
`;
const Ticks = styled.div`display: flex; justify-content: space-between; margin: auto 4px 0; i { width: 1px; height: 4px; background: #777; }`;
const Track = styled.div`flex: 1; margin: 0 5px 0 4px; background: #333;`;
const ZoomFoot = styled.div`display: flex; align-items: center; height: 13px; flex: none; border-top: 1px solid #0f0f0f; background: #141414;`;
const ZoomBox = styled.div`display: flex; align-items: center; gap: 8px; width: 70px; height: 12px; padding-left: 2px; background: #232323; color: #6c6c6c;`;
const RightRail = styled.div`
  display: flex; flex-direction: column; align-items: center; width: 12px; flex: none; padding-top: 25px; gap: 5px; color: #999;
  &::after { content: ""; flex: 1; width: 12px; background: #161616; margin-bottom: 12px; }
`;
const Cursor = styled.div`position: absolute; right: 24px; top: -2px;`;
const Toggle = styled.button`margin: 0 0 0 auto; width: 182px; text-align: left; font-size: 7px; color: #ccc;`;

const Timeline = () => (
  <Panel>
    <Tabs>
      <Tab $w={71}>BG Renderer</Tab>
      <Tab $on $w={59} $pad={7}><G w={4} h={4} stroke color="#888"><path d="M0 0l4 4M4 0 0 4" /></G>(none) <Grip /></Tab>
    </Tabs>
    <TimelineBody>
      <LayerSide>
        <SearchRow>
          <TimelineSearch><Lens /><input aria-label="Search layers" /></TimelineSearch>
          <G w={11} h={9}><path d="M0 1h6v2h5v1H5V2H0zM4 3h1v5H4zM4 7h6v1H4zM7 2h4v3H7zM7 6h3v3H7zM5 5h5v1H5z" /></G>
          <G w={11} h={11} stroke><path d="M7 4l3 1.500v3.500L7 10.500 4 9V5.500zM4.500 5.800 7 7l2.500-1.200M7 7v3M2.500 0v5M0 2.500h5M.7.700l3.600 3.600M4.300.700.7 4.300" /></G>
          <Row $gap={7}>
            <G w={11} h={9}><path fillRule="evenodd" d="M0 5.500h2V2.500Q3.500 0 5.500 0T9 2.500v3h2V9H0zM5 2 3.800 4.500H5V7h1V4.500h1.200L6 2z" /></G>
            <G w={10} h={10}><path fillRule="evenodd" d="M3 0h7v7H3zM4 1v2h2V1zM7 1v5h2V1zM4 4v2h2V4z" /><path d="M0 3h2v5h5v2H0z" opacity=".7" /></G>
            <G w={10} h={10}><circle cx="6" cy="4" r="3.300" fill="none" stroke="currentColor" /><circle cx="3.500" cy="6.500" r="3" opacity=".8" /></G>
          </Row>
          <G w={12} h={9}><path fillRule="evenodd" d="M1 0h10v9H1zM2 1v1l3 1h5V1z" /><path d="M1.500 4.500Q5 4 6 5.500t4.500.5" stroke="#262626" fill="none" /></G>
        </SearchRow>
        <ListHead>
          <HeadCell $w={44}>
            <Icons $gap={3} $pad="0">
              <G w={8} h={7} color="#a0a0a0"><path fillRule="evenodd" d="M0 3.500Q4-1 8 3.500 4 8 0 3.500zM4 2a1.500 1.500 0 1 0 .01 0z" /></G>
              <G w={8} h={7} color="#a0a0a0"><path d="M0 2h2l2-2v7L2 5H0z" /><path d="M5.500 1.500q1 2 0 4M7 .5q1.500 3 0 6" fill="none" stroke="currentColor" strokeWidth=".8" /></G>
              <G w={6} h={6} color="#b0b0b0"><circle cx="3" cy="3" r="2.500" /></G>
              <G w={6} h={8} color="#b0b0b0"><path d="M0 3h6v5H0z" /><path d="M1.200 3V1h3.600v2" fill="none" stroke="currentColor" /></G>
            </Icons>
          </HeadCell>
          <HeadCell $w={20} $line><Row $pad="0 0 0 5px"><Tag /></Row></HeadCell>
          <HeadCell $w={21} $line>#</HeadCell>
          <HeadCell $w={183} $line>Source Name</HeadCell>
          <HeadCell $w={54} $line>Mode</HeadCell>
          <HeadCell $w={12}>T</HeadCell>
          <HeadCell $w={45}>TrkMat</HeadCell>
          <HeadCell $w={78} $line>Parent</HeadCell>
          <HeadCell $line />
        </ListHead>
        <Spacer />
        <TimeFoot>
          <Icons $gap={4} $pad="0">
            <G w={8} h={8} stroke><path d="M.5.5h5v4h-5zM2.500 2.500h5v5h-5zM4 4h2v2H4z" /></G>
            <G w={8} h={8} stroke sw={1.2} color="#2a91b8"><circle cx="3" cy="3" r="2.400" /><path d="M3 3.500h4v4H3z" /></G>
            <G w={7} h={8} stroke><path d="M2.500.5h-1v7h1M4.500.5h1v7h-1M0 4h2M5 4h2" /></G>
          </Icons>
          <Toggle>Toggle Switches / Modes</Toggle>
        </TimeFoot>
      </LayerSide>
      <TimeSide>
        <Ruler><WorkBar /><Ticks>{Array.from({ length: 16 }, (_, i) => <i key={i} />)}</Ticks></Ruler>
        <Track />
        <ZoomFoot>
          <ZoomBox>
            <G w={7} h={4}><path d="M0 4l2-2 1 1 1.500-2L7 4z" /></G>
            <G w={30} h={9}><path d="M8 4h22v1H8z" fill="#111" /><path d="M0 3l3.500-3L7 3v6H0z" fill="#8b8b8b" /></G>
            <G w={12} h={5}><path d="M0 5l3-4 2 2 2-3 2 2 1-1 2 4z" /></G>
          </ZoomBox>
        </ZoomFoot>
      </TimeSide>
      <RightRail>
        <G w={8} h={9}><path d="M.5.5h7V6L4 8.500.5 6z" fill="#555" stroke="#888" /></G>
        <G w={10} h={9}><circle cx="3" cy="2.500" r="2.500" /><path d="M1 5h5v4H0z" /><path d="M5.500 2.500h4v5h-4z" fill="none" stroke="currentColor" /></G>
      </RightRail>
      <Cursor><G w={16} h={14}><path d="M.7.700v9l2-1.700 1.600 3.500 1.700-.8L4.500 7.500 7 7z" fill="#222" stroke="#bbb" strokeWidth=".8" /><path d="M8 6h7v3h-2v3H6V9h2z" fill="#bbb" /><path d="M9 7.500h4M7.500 10.500h4" stroke="#333" /></G></Cursor>
    </TimelineBody>
  </Panel>
);

/* ---------- anchor & crop ---------- */
const AnchorBody = styled.div`display: flex; flex-direction: column; gap: 1px; padding: 4px 25px 0 4px;`;
const AnchorRow = styled.div`display: flex; align-items: center; justify-content: space-between; height: 60px;`;
const AnchorGrid = styled.div`display: grid; grid-template-columns: repeat(3, 13px); grid-auto-rows: 12px; gap: 6px; justify-items: center; align-items: center;`;
const End = styled.div`display: flex; justify-content: flex-end;`;
const Arrow = ({ a }: { a: number }) => <G w={12} h={12} color="#b5b5b5"><g transform={`rotate(${a} 6 6)`}><path d="M6 0l2.500 6h-5z" /><path d="M5.500 5h1v7h-1z" opacity=".6" /></g></G>;
const Anchor = () => (
  <Panel $h={189}>
    <Tabs><Tab $on $w={104} $pad={7}>RepositionAnchorPoint <Grip /></Tab></Tabs>
    <AnchorBody>
      <End><DarkButton $w={17} $h={14} $bg="#1f1f1f">?</DarkButton></End>
      <AnchorRow>
        <span>Anchor:</span>
        <AnchorGrid>
          {[-45, 0, 45, -90, null, 90, -135, 180, 135].map((a, i) => a === null
            ? <G key={i} w={7} h={7}><path d="M0 0h7v7H0z" fill="#bb891c" /></G> : <Arrow key={i} a={a} />)}
        </AnchorGrid>
      </AnchorRow>
      <End><DarkButton $w={57} $h={19} $bg="#1f1f1f">Reposition</DarkButton></End>
    </AnchorBody>
  </Panel>
);
const CropBody = styled.div`display: flex; flex-direction: column; padding: 4px 0 0 4px; gap: 5px; label { white-space: nowrap; width: 48px; }`;
const Crop = () => (
  <Panel $h={68}>
    <Tabs><Tab $on $w={117} $pad={7}>pt_CropPrecomps <Grip /></Tab></Tabs>
    <CropBody>
      <Row $h={16} $gap={8}><label htmlFor="retain">Retain border</label><Field id="retain" $w={29} $bg="#1f1f1f" defaultValue="0" /><span>pixels</span></Row>
      <Row $h={20} $gap={7}><DarkButton $w={20} $h={14} $bg="#1f1f1f">?</DarkButton><DarkButton $w={84} $h={19} $bg="#1f1f1f">Crop Precomps</DarkButton></Row>
    </CropBody>
  </Panel>
);

export default function App() {
  return (
    <Shell>
      <Global />
      <TitleBar>
        <G w={11} h={11}><path d="M0 0h11v11H0z" fill="#8a6fd0" /><path d="M1 1h9v9H1z" fill="#1f0540" /><text x="1.500" y="8" fontSize="6" fontWeight="700" fill="#c39bff" fontFamily="Open Sans, sans-serif">Ae</text></G>
        <Title>Adobe After Effects CC 2015 - Untitled Project.aep</Title>
        <WindowButton aria-label="Minimize"><G w={7} h={7}><path d="M0 3h7v1H0z" opacity=".6" /></G></WindowButton>
        <WindowButton aria-label="Restore"><G w={7} h={7} stroke><path d="M.5 2.500h4v4h-4zM2 2V.5h4.500V5H5" /></G></WindowButton>
        <WindowButton aria-label="Close"><G w={7} h={7} stroke><path d="M.5.5l6 6M6.500.5l-6 6" /></G></WindowButton>
      </TitleBar>
      <MenuBar>{["File", "Edit", "Composition", "Layer", "Effect", "Animation", "View", "Window", "Help"].map(m => <MenuItem key={m}>{m}</MenuItem>)}</MenuBar>
      <Toolbar>
        <ToolGroup>
          <Tool $color="#2aa7d4" aria-label="Selection"><G w={9} h={11} stroke><path d="M1.500 1v8l2-1.800L5 10.500l1.200-.6L4.800 6.800h2.700z" /></G></Tool>
          <Tool $color="#bdbdbd" aria-label="Hand"><G w={12} h={12}><path d="M3.300 6 2.600 2.300q.6-1 1.200 0L4.600 5 4.700.900q.6-1 1.200 0L6.100 5l.8-3.700q.8-.8 1.200.1L7.800 5.400l1.400-2.700q.9-.5 1 .3L8.600 8.500 7.600 11.500H4.300L2.300 9 .3 6.500q.2-1 1.300-.4L3.300 7.300z" /></G></Tool>
          <Tool aria-label="Zoom"><G w={11} h={11}><circle cx="4.500" cy="4.500" r="3" fill="#4e4e4e" stroke="currentColor" strokeWidth="1.300" /><path d="M6.500 6.500 10 10" stroke="currentColor" strokeWidth="2" /></G></Tool>
        </ToolGroup>
        <ToolGroup>
          <Tool aria-label="Rotation"><G w={11} h={11} stroke sw={1.2}><path d="M2 3a4.200 4.200 0 1 1-.3 4.500" strokeDasharray="14 1 1 1 1 1" /><path d="M1 1v3.500h3.500" /></G></Tool>
          <Tool aria-label="Camera"><G w={13} h={11}><path fillRule="evenodd" d="M0 2h8v2.500L11 3v5L8 6.500V9H0zM1 3v5h6V3z" /><path d="M1 3h6v5H1z" opacity=".5" /><path d="M11 10h2v1h-2z" /></G></Tool>
          <Tool aria-label="Pan behind"><G w={12} h={12}><circle cx="6" cy="6" r="2.800" fill="none" stroke="currentColor" strokeWidth="1.400" /><path d="M0 0h2v1H0zM3.500 0h1.500v1H3.500zM7 0h1.500v1H7zM10 0h2v1h-2zM0 11h2v1H0zM3.500 11h1.500v1H3.500zM7 11h1.500v1H7zM10 11h2v1h-2zM0 3h1v2H0zM0 7h1v2H0zM11 3h1v2h-1zM11 7h1v2h-1zM2 2h1.500v1.500H2zM8.500 2H10v1.500H8.500zM2 8.500h1.500V10H2zM8.500 8.500H10V10H8.500z" /></G></Tool>
        </ToolGroup>
        <ToolGroup>
          <Tool aria-label="Rectangle"><G w={12} h={10}><path d="M.5 1h9v7.500h-9z" fill="#555" stroke="currentColor" /><path d="M10.500 9h1.500v1h-1.500z" /></G></Tool>
          <Tool aria-label="Pen"><G w={12} h={12}><path d="M7 0 10.500 3.500 9.500 5 5.500 1.500zM5 2.200 8.800 5.800 7.500 9 1 10.800 4 7.500h1V6.300H3.700L.5 10 2 4z" /><path d="M10.500 10.500H12v1h-1.500z" /></G></Tool>
          <Tool aria-label="Type"><G w={11} h={10}><path d="M0 0h9v3H8L7.500 1.200h-2V8.500l1.500.5v.5H2V9l1.500-.5V1.200h-2L1 3H0zM10 9h1v1h-1z" /></G></Tool>
        </ToolGroup>
        <ToolGroup>
          <Tool aria-label="Brush"><G w={12} h={12}><path d="M11.500 0 12 1 6.500 7.500 5 6zM4.500 6.500 6 8q-.5 3-6 3 2-1 2.500-3 .8-1.400 2-1.500z" /></G></Tool>
          <Tool aria-label="Clone stamp"><G w={11} h={11}><path d="M4 0h3q1.500 1.500 0 3.500V6h3.500v2.500H.5V6H4V3.500Q2.500 1.500 4 0zM.5 9.500h10v1H.5z" /></G></Tool>
          <Tool aria-label="Eraser"><G w={12} h={10}><path d="M5 1h6.500L7 6H.5z" /><path d="M.5 6.500h6.300L11.500 1.500v2.300L7 9H.5z" opacity=".7" /></G></Tool>
        </ToolGroup>
        <ToolGroup><Tool aria-label="Roto brush"><G w={14} h={12}><path d="M12.500 0l.8.800L8 8 6.500 6.500zM6 7l1.700 1.500Q6 11 2.500 11 4.500 9.500 6 7zM12 10.500h1.500v1H12z" /><circle cx="4.500" cy="1.500" r="1" /><path d="M4.500 3 3.500 6l-2 4.500M4 3.500 1.500 4.500 1 6M4.500 3.500 6 5M9.500 10.500l3-4.500" stroke="currentColor" fill="none" /></G></Tool></ToolGroup>
        <ToolGroup><Tool aria-label="Puppet pin"><G w={12} h={12}><path d="M6.500 0 11 4.500 10 5.500 9 5.300 7 7.300 7.200 9.500 6.300 10.500 3.800 8 .5 11.500 0 11l3.200-3.700L.8 4.800 2 4l2 .2L6 2.200 5.600 1z" /></G></Tool></ToolGroup>
        <AxisTools>
          <Tool $w={16}><G w={11} h={11} stroke><path d="M5.500 1v6M5.500 7 1.500 9.500M5.500 7l4 2.500M4 2.500 5.500.7 7 2.500M1 7.500v2.500h3M10 7.500v2.500H7" /></G></Tool>
          <Tool $w={16}><G w={11} h={11} stroke><path d="M5.500 1v6L1.500 9.500M5.500 7l4 2.500M4 2.500 5.500.7 7 2.500M1 7.500v2.500h3M10 7.500v2.500H7" /><path d="M3.500 5.500h4v3h-4z" fill="currentColor" opacity=".7" /></G></Tool>
          <Tool $w={15}><G w={11} h={11} stroke><path d="M1 1l9 9M1 1v8l3-3M1 1h3M10 1v9M10 1 6 5M4 2l6-1M1 9.500 10 10" /></G></Tool>
        </AxisTools>
        <Snapping>
          <CheckLabel><Check type="checkbox" />Snapping</CheckLabel>
          <Tool $w={14} $color="#a0a0a0"><G w={9} h={9} stroke><path d="M0 8.500 3 5l2 1 3-5M5 1h3v3M5 6l2.500 2.500" /></G></Tool>
          <Tool $w={14} $color="#2a91b8"><G w={9} h={9} stroke><path d="M.5 2.500v-2h2M6.500.5h2v2M8.500 6.500v2h-2M2.500 8.500h-2v-2M2 2l1.500 1.500M7 2 5.500 3.500M7 7 5.500 5.500M2 7l1.500-1.500" /></G></Tool>
        </Snapping>
        <Workspaces>
          <Workspace $w={65}>Essentials</Workspace>
          <Workspace $w={61}>Standard</Workspace>
          <Workspace $w={72}>Small Screen</Workspace>
          <Workspace $on $w={62}>ZLov_Std <Burger /></Workspace>
          <Workspace $w={92}>CompTimelineOnly</Workspace>
          <Workspace $w={17} aria-label="More workspaces"><Chevrons /></Workspace>
          <G w={13} h={8} color="#b5b5b5"><path fillRule="evenodd" d="M0 0h13v8H0zM3.500 2a2 2 0 1 0 .01 0zM6 1v1h2V1zM9.500 2a2 2 0 1 0 .01 0zM5.500 6v1h2V6z" /></G>
        </Workspaces>
        <HelpSearch><Lens menu={false} /><input placeholder="Search Help" aria-label="Search Help" /></HelpSearch>
      </Toolbar>
      <Upper>
        <Project />
        <Viewer />
        <Column $w={137}><Info /><Rift /><Sortie /></Column>
        <Column $w={136}><Effects /><Align /></Column>
      </Upper>
      <Lower>
        <FtToolbar />
        <Panel $w={28}>
          <Tabs><Tab $on $w={15} $pad={7}>zl_</Tab></Tabs>
          <SlimList $bg="#666" $m="1px 5px 0 2px">{zlIcons.map((c, i) => <SlimButton key={i} $h={21}>{c}</SlimButton>)}</SlimList>
        </Panel>
        <Panel $w={23}>
          <Tabs><Tab $on $w={11} $pad={6}>L</Tab></Tabs>
          <SlimList $gap={2} $m="5px 4px 0 3px">{layerIcons.map((c, i) => <SlimButton key={i} $h={16} $bg="#1f1f1f">{c}</SlimButton>)}</SlimList>
        </Panel>
        <Timeline />
        <Column $w={117}><Anchor /><Crop /></Column>
      </Lower>
    </Shell>
  );
}
